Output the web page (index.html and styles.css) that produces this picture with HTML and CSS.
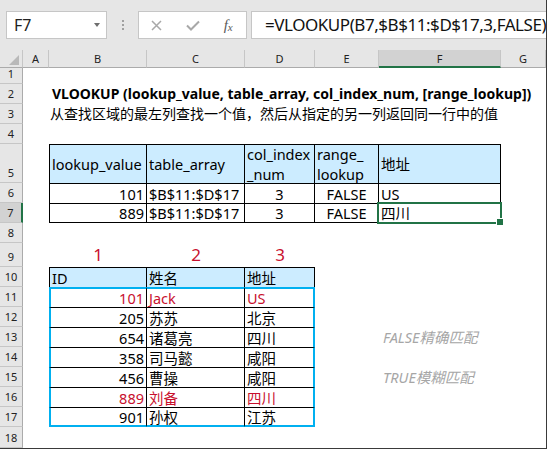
FILE: index.html
```html
<!DOCTYPE html>
<html lang="zh">
<head>
<meta charset="utf-8">
<title>VLOOKUP</title>
<link rel="stylesheet" href="styles.css">
</head>
<body>
<div class="app">
  <div class="fbar">
    <div class="namebox"><span class="ref">F7</span><span class="caret"></span></div>
    <div class="grip"><i></i><i></i><i></i></div>
    <div class="btns">
      <span class="btn"><svg width="11" height="11" viewBox="0 0 11 11"><path d="M1 1L10 10M10 1L1 10" stroke="#a8a8a8" stroke-width="1.5" fill="none"/></svg></span>
      <span class="btn"><svg width="14" height="11" viewBox="0 0 14 11"><path d="M1 5.5L5 9.5L13 1.5" stroke="#a8a8a8" stroke-width="2" fill="none"/></svg></span>
      <span class="btn fx">f<span class="fxx">x</span></span>
    </div>
    <div class="formula">=VLOOKUP(B7,$B$11:$D$17,3,FALSE)</div>
  </div>

  <div class="sheet">
    <div class="corner"><svg width="10" height="10" viewBox="0 0 10 10"><path d="M10 0V10H0Z" fill="#b9b9b9"/></svg></div>
    <div class="ch">A</div><div class="ch">B</div><div class="ch">C</div><div class="ch">D</div><div class="ch">E</div><div class="ch on">F</div><div class="ch">G</div>

    <div class="rh">1</div><div class="s7"></div>

    <div class="rh">2</div><div></div><div class="c title s6">VLOOKUP (lookup_value, table_array, col_index_num, [range_lookup])</div>

    <div class="rh">3</div><div></div><div class="c sub s6">从查找区域的最左列查找一个值，然后从指定的另一列返回同一行中的值</div>

    <div class="rh">4</div><div class="s7"></div>

    <div class="rh">5</div><div></div>
    <div class="c tb tl hd">lookup_value</div>
    <div class="c tb hd">table_array</div>
    <div class="c tb hd">col_index<br>_num</div>
    <div class="c tb hd">range_<br>lookup</div>
    <div class="c tb hd">地址</div>
    <div></div>

    <div class="rh">6</div><div></div>
    <div class="c tb tl r">101</div>
    <div class="c tb">$B$11:$D$17</div>
    <div class="c tb m">3</div>
    <div class="c tb m">FALSE</div>
    <div class="c tb">US</div>
    <div></div>

    <div class="rh on">7</div><div></div>
    <div class="c tb tl bb r">889</div>
    <div class="c tb bb">$B$11:$D$17</div>
    <div class="c tb bb m">3</div>
    <div class="c tb bb m">FALSE</div>
    <div class="c tb bb sel">四川</div>
    <div></div>

    <div class="rh">8</div><div class="s7"></div>

    <div class="rh">9</div><div></div>
    <div class="c m idx">1</div>
    <div class="c m idx">2</div>
    <div class="c m idx">3</div>
    <div class="s3"></div>

    <div class="rh">10</div><div></div>
    <div class="c tb tl hd">ID</div>
    <div class="c tb hd">姓名</div>
    <div class="c tb hd">地址</div>
    <div class="s3"></div>

    <div class="rh">11</div><div></div>
    <div class="c tb r red cl ct">101</div>
    <div class="c tb red ct">Jack</div>
    <div class="c tb red ct cr">US</div>
    <div></div><div></div><div></div>

    <div class="rh">12</div><div></div>
    <div class="c tb r cl">205</div>
    <div class="c tb">苏苏</div>
    <div class="c tb cr">北京</div>
    <div></div><div></div><div></div>

    <div class="rh">13</div><div></div>
    <div class="c tb r cl">654</div>
    <div class="c tb">诸葛亮</div>
    <div class="c tb cr">四川</div>
    <div></div><div class="c note">FALSE精确匹配</div><div></div>

    <div class="rh">14</div><div></div>
    <div class="c tb r cl">358</div>
    <div class="c tb">司马懿</div>
    <div class="c tb cr">咸阳</div>
    <div></div><div></div><div></div>

    <div class="rh">15</div><div></div>
    <div class="c tb r cl">456</div>
    <div class="c tb">曹操</div>
    <div class="c tb cr">咸阳</div>
    <div></div><div class="c note">TRUE模糊匹配</div><div></div>

    <div class="rh">16</div><div></div>
    <div class="c tb r red cl">889</div>
    <div class="c tb red">刘备</div>
    <div class="c tb red cr">四川</div>
    <div></div><div></div><div></div>

    <div class="rh">17</div><div></div>
    <div class="c tb r cl cb">901</div>
    <div class="c tb cb">孙权</div>
    <div class="c tb cr cb">江苏</div>
    <div></div><div></div><div></div>

    <div class="rh">18</div><div class="s7"></div>
  </div>
</div>
</body>
</html>
```

FILE: styles.css
```css
* { box-sizing: border-box; }
html, body { margin: 0; padding: 0; }
body {
  width: 547px;
  height: 449px;
  overflow: hidden;
  background: #fff;
  font-family: "Noto Sans", "Noto Sans CJK SC", sans-serif;
  color: #000;
}
.app {
  width: 547px;
  height: 449px;
  border-right: 1px solid #3a3a3a;
  border-bottom: 1px solid #3a3a3a;
  background: #fff;
  overflow: hidden;
}

/* formula bar */
.fbar {
  height: 50px;
  background: #e6e6e6;
  display: flex;
  align-items: flex-start;
  padding: 11px 0 0 6px;
}
.namebox {
  width: 101px;
  height: 28px;
  background: #fff;
  border: 1px solid #c6c6c6;
  display: flex;
  align-items: center;
  justify-content: space-between;
  padding: 0 6px 0 7px;
}
.ref { font-size: 16px; color: #222; }
.caret {
  width: 0; height: 0;
  border-left: 3.5px solid transparent;
  border-right: 3.5px solid transparent;
  border-top: 4px solid #6e6e6e;
}
.grip {
  width: 31px;
  display: flex;
  flex-direction: column;
  align-items: center;
  gap: 2px;
  padding-top: 9px;
}
.grip i { display: block; width: 2px; height: 2px; background: #a0a0a0; }
.btns {
  width: 109px;
  height: 28px;
  background: #fff;
  border: 1px solid #c6c6c6;
  display: flex;
  align-items: center;
}
.btn {
  width: 36px;
  display: flex;
  justify-content: center;
  align-items: center;
}
.fx {
  font-family: "Liberation Serif", serif;
  font-style: italic;
  font-size: 15px;
  color: #5a5a5a;
}
.fxx { font-size: 11px; margin-top: 4px; }
.formula {
  flex: 1;
  margin-left: 4px;
  height: 28px;
  background: #fff;
  border: 1px solid #c6c6c6;
  border-right: none;
  padding-left: 13px;
  font-size: 17px;
  letter-spacing: -0.45px;
  line-height: 26px;
  white-space: nowrap;
  overflow: hidden;
  color: #111;
}

/* sheet */
.sheet {
  display: grid;
  grid-template-columns: 23px 26px 98px 98px 70px 64px 122px 45px;
  grid-template-rows: 18px 16px 20px 20px 20px 39px 20px 20px 20px 24px repeat(8, 20px) 21px;
  font-size: 14.5px;
}
.corner {
  background: #e6e6e6;
  border-right: 1px solid #c6c6c6;
  border-bottom: 1px solid #ababab;
  display: flex;
  align-items: flex-end;
  justify-content: flex-end;
  padding: 0 3px 2px 0;
}
.ch {
  background: #e6e6e6;
  border-right: 1px solid #c6c6c6;
  border-bottom: 1px solid #ababab;
  font-size: 11px;
  color: #222;
  display: flex;
  align-items: center;
  justify-content: center;
}
.ch.on {
  background: #d2d2d2;
  border-bottom: 2px solid #217346;
}
.rh {
  background: #e6e6e6;
  border-right: 1px solid #ababab;
  border-bottom: 1px solid #c6c6c6;
  font-size: 11px;
  color: #222;
  display: flex;
  align-items: flex-end;
  justify-content: center;
  padding-bottom: 2px;
}
.rh.on {
  background: #d2d2d2;
  border-right: 2px solid #217346;
}
.s7 { grid-column: span 7; }
.s6 { grid-column: span 6; }
.s3 { grid-column: span 3; }

.c {
  display: flex;
  align-items: center;
  padding: 0 2px;
  line-height: 20px;
  white-space: nowrap;
  min-width: 0;
}
.r { justify-content: flex-end; }
.m { justify-content: center; }
.title { font-weight: 700; font-size: 14px; padding-left: 3px; }
.sub { font-size: 14px; padding-left: 1px; }

.tb { border-top: 1px solid #000; border-right: 1px solid #000; }
.tl { border-left: 1px solid #000; }
.bb { border-bottom: 1px solid #000; }
.hd { background: #ccecff; }

.cl { border-left: 2px solid #00b0f0; }
.cr { border-right: 2px solid #00b0f0; }
.ct { border-top: 2px solid #00b0f0; }
.cb { border-bottom: 2px solid #00b0f0; }

.red { color: #c8102e; }
.idx { color: #c8102e; font-size: 17px; }
.note { color: #a6a6a6; font-style: italic; padding-left: 4px; }

.sel { position: relative; }
.sel::after {
  content: "";
  position: absolute;
  left: -2px; top: -2px; right: -2px; bottom: -2px;
  border: 2px solid #217346;
}
.sel::before {
  content: "";
  position: absolute;
  right: -4px;
  bottom: -4px;
  width: 6px;
  height: 6px;
  background: #217346;
  border: 1px solid #fff;
  z-index: 1;
}
```
